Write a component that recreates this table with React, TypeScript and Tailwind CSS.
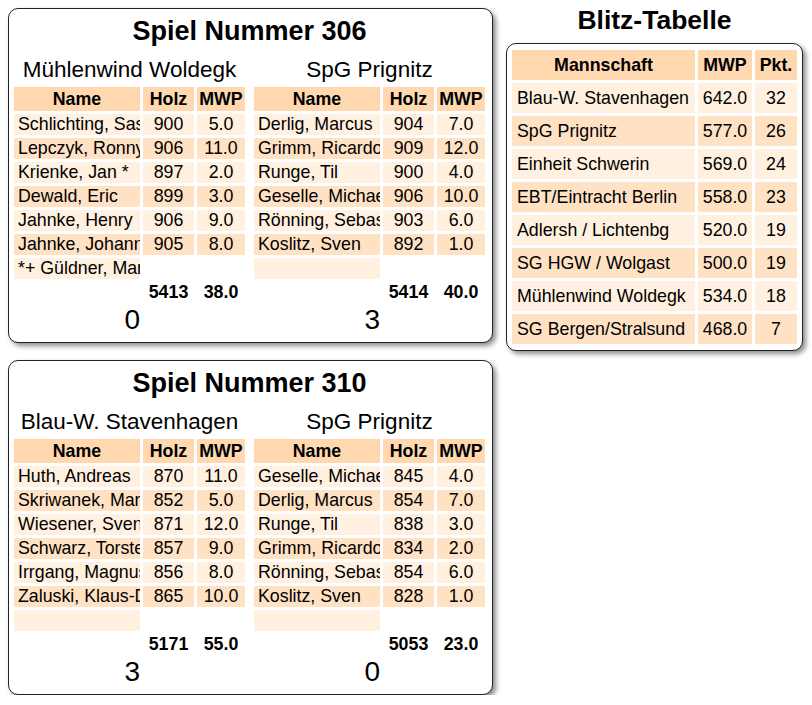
import type { ReactNode } from "react";

type Player = { name: string; holz?: number; mwp?: string };

type Team = {
  name: string;
  players: Player[];
  holz: number;
  mwp: string;
  score: number;
};

type Game = { nr: number; home: Team; guest: Team };

const GAMES: Game[] = [
  {
    nr: 306,
    home: {
      name: "Mühlenwind Woldegk",
      players: [
        { name: "Schlichting, Sascha", holz: 900, mwp: "5.0" },
        { name: "Lepczyk, Ronny", holz: 906, mwp: "11.0" },
        { name: "Krienke, Jan *", holz: 897, mwp: "2.0" },
        { name: "Dewald, Eric", holz: 899, mwp: "3.0" },
        { name: "Jahnke, Henry", holz: 906, mwp: "9.0" },
        { name: "Jahnke, Johannes", holz: 905, mwp: "8.0" },
        { name: "*+ Güldner, Marcel" },
      ],
      holz: 5413,
      mwp: "38.0",
      score: 0,
    },
    guest: {
      name: "SpG Prignitz",
      players: [
        { name: "Derlig, Marcus", holz: 904, mwp: "7.0" },
        { name: "Grimm, Ricardo", holz: 909, mwp: "12.0" },
        { name: "Runge, Til", holz: 900, mwp: "4.0" },
        { name: "Geselle, Michael", holz: 906, mwp: "10.0" },
        { name: "Rönning, Sebastian", holz: 903, mwp: "6.0" },
        { name: "Koslitz, Sven", holz: 892, mwp: "1.0" },
        { name: "" },
      ],
      holz: 5414,
      mwp: "40.0",
      score: 3,
    },
  },
  {
    nr: 310,
    home: {
      name: "Blau-W. Stavenhagen",
      players: [
        { name: "Huth, Andreas", holz: 870, mwp: "11.0" },
        { name: "Skriwanek, Marco", holz: 852, mwp: "5.0" },
        { name: "Wiesener, Sven", holz: 871, mwp: "12.0" },
        { name: "Schwarz, Torsten", holz: 857, mwp: "9.0" },
        { name: "Irrgang, Magnus", holz: 856, mwp: "8.0" },
        { name: "Zaluski, Klaus-Dieter", holz: 865, mwp: "10.0" },
        { name: "" },
      ],
      holz: 5171,
      mwp: "55.0",
      score: 3,
    },
    guest: {
      name: "SpG Prignitz",
      players: [
        { name: "Geselle, Michael", holz: 845, mwp: "4.0" },
        { name: "Derlig, Marcus", holz: 854, mwp: "7.0" },
        { name: "Runge, Til", holz: 838, mwp: "3.0" },
        { name: "Grimm, Ricardo", holz: 834, mwp: "2.0" },
        { name: "Rönning, Sebastian", holz: 854, mwp: "6.0" },
        { name: "Koslitz, Sven", holz: 828, mwp: "1.0" },
        { name: "" },
      ],
      holz: 5053,
      mwp: "23.0",
      score: 0,
    },
  },
];

const TABLE = [
  { mwp: "642.0", pkt: 32, name: "Blau-W. Stavenhagen" },
  { mwp: "577.0", pkt: 26, name: "SpG Prignitz" },
  { mwp: "569.0", pkt: 24, name: "Einheit Schwerin" },
  { mwp: "558.0", pkt: 23, name: "EBT/Eintracht Berlin" },
  { mwp: "520.0", pkt: 19, name: "Adlersh / Lichtenbg" },
  { mwp: "500.0", pkt: 19, name: "SG HGW / Wolgast" },
  { mwp: "534.0", pkt: 18, name: "Mühlenwind Woldegk" },
  { mwp: "468.0", pkt: 7, name: "SG Bergen/Stralsund" },
];

const HEAD = "bg-[#ffd8b0]";
const LIGHT = "bg-[#fff0df]";
const DARK = "bg-[#ffe1c4]";

function Cell({ bg, className, children }: { bg: string; className?: string; children?: ReactNode }) {
  return <div className={`${bg} overflow-hidden whitespace-nowrap ${className ?? ""}`}>{children}</div>;
}

function TeamTable({ team }: { team: Team }) {
  return (
    <div className="w-[231px] flex flex-col">
      <div className="text-[22.5px] leading-[26px] text-center whitespace-nowrap">{team.name}</div>
      <div className="mt-[4px] grid grid-cols-[126px_51px_48px] gap-[3px] text-[17.8px] leading-[21px]">
        <Cell bg={HEAD} className="h-[24px] leading-[24px] font-bold text-center">Name</Cell>
        <Cell bg={HEAD} className="h-[24px] leading-[24px] font-bold text-center">Holz</Cell>
        <Cell bg={HEAD} className="h-[24px] leading-[24px] font-bold text-center">MWP</Cell>
        {team.players.map((p, i) => {
          const bg = i % 2 === 0 ? LIGHT : DARK;
          const has = p.holz !== undefined;
          return [
            <Cell key={`n${i}`} bg={bg} className="h-[21px] pl-[4px]">{p.name}</Cell>,
            <Cell key={`h${i}`} bg={has ? bg : "bg-transparent"} className="h-[21px] text-center">{p.holz}</Cell>,
            <Cell key={`m${i}`} bg={has ? bg : "bg-transparent"} className="h-[21px] text-center">{p.mwp}</Cell>,
          ];
        })}
        <div className="h-[21px]" />
        <div className="h-[21px] font-bold text-center">{team.holz}</div>
        <div className="h-[21px] font-bold text-center">{team.mwp}</div>
      </div>
      <div className="w-[126px] mt-[2px] text-[28px] leading-[30px] text-right">{team.score}</div>
    </div>
  );
}

function GameCard({ game }: { game: Game }) {
  return (
    <div className="w-[485px] h-[335px] border border-[#222] rounded-[10px] bg-white shadow-[3px_3px_5px_rgba(0,0,0,0.45)] pt-[7px] pl-[5px] pr-[7px]">
      <h2 className="text-[27px] leading-[30px] font-bold text-center">Spiel Nummer {game.nr}</h2>
      <div className="mt-[11px] flex gap-[9px]">
        <TeamTable team={game.home} />
        <TeamTable team={game.guest} />
      </div>
    </div>
  );
}

export default function App() {
  return (
    <div className="flex items-start px-[8px] bg-white text-black font-['Liberation_Sans',Arial,sans-serif]">
      <div className="pt-[8px] flex flex-col gap-[17px]">
        {GAMES.map((g) => (
          <GameCard key={g.nr} game={g} />
        ))}
      </div>
      <div className="ml-[13px] pt-[5px] w-[297px] flex flex-col">
        <h2 className="text-[26.5px] leading-[30px] font-bold text-center">Blitz-Tabelle</h2>
        <div className="mt-[8px] border border-[#222] rounded-[10px] bg-white shadow-[3px_3px_5px_rgba(0,0,0,0.45)] p-[6px] pl-[5px]">
          <div className="grid grid-cols-[183px_54px_42px] gap-[3px] text-[17.8px] leading-[30px]">
            <Cell bg={HEAD} className="h-[30px] font-bold text-center">Mannschaft</Cell>
            <Cell bg={HEAD} className="h-[30px] font-bold text-center">MWP</Cell>
            <Cell bg={HEAD} className="h-[30px] font-bold text-center">Pkt.</Cell>
            {TABLE.map((r, i) => {
              const bg = i % 2 === 0 ? LIGHT : DARK;
              return [
                <Cell key={`t${i}`} bg={bg} className="h-[30px] pl-[5px]">{r.name}</Cell>,
                <Cell key={`w${i}`} bg={bg} className="h-[30px] text-center">{r.mwp}</Cell>,
                <Cell key={`p${i}`} bg={bg} className="h-[30px] text-center">{r.pkt}</Cell>,
              ];
            })}
          </div>
        </div>
      </div>
    </div>
  );
}
